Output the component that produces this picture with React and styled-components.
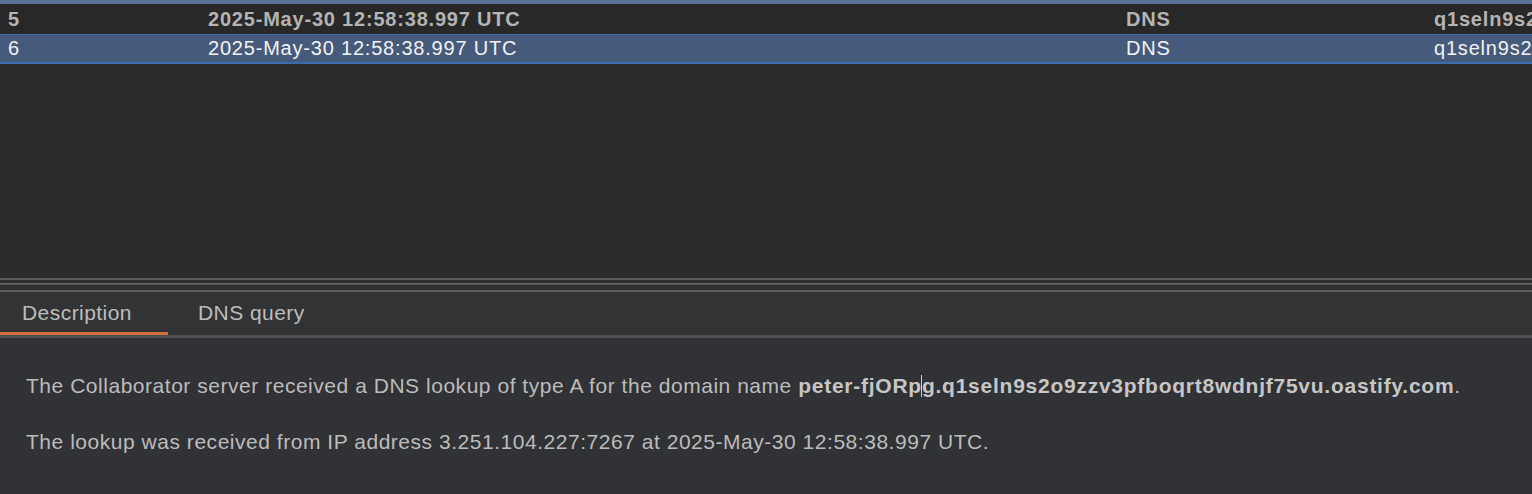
import React from "react";
import styled, { createGlobalStyle } from "styled-components";

const Global = createGlobalStyle`
  html, body { margin: 0; padding: 0; background: #2b2b2b; }
  body { font-family: "Liberation Sans", Arial, sans-serif; overflow: hidden; }
  #root { width: 1532px; height: 494px; }
`;

const Page = styled.div`
  width: 1532px;
  height: 494px;
  display: flex;
  flex-direction: column;
  overflow: hidden;
`;

const TableArea = styled.div`
  height: 278px;
  background: #2b2b2b;
  border-top: 4px solid #5a7196;
  box-sizing: border-box;
  display: flex;
  flex-direction: column;
`;

const Row = styled.div`
  display: grid;
  grid-template-columns: 208px 918px 308px 1fr;
  height: 30px;
  align-items: center;
  box-sizing: border-box;
  font-size: 20px;
  letter-spacing: 0.8px;
  white-space: nowrap;
  overflow: hidden;
  background: ${(p) => (p.$selected ? "#465a7b" : "#282828")};
  color: ${(p) => (p.$selected ? "#f2f2f2" : "#b4b4b4")};
  font-weight: ${(p) => (p.$selected ? 400 : 700)};
  border-top: ${(p) => (p.$selected ? "1px solid #3a6cae" : "none")};
  border-bottom: ${(p) => (p.$selected ? "2px solid #3a6cae" : "none")};
`;

const Cell = styled.div`
  padding-left: ${(p) => (p.$first ? "8px" : "0")};
  overflow: hidden;
  line-height: 26px;
  margin-top: -1px;
`;

const Divider = styled.div`
  display: flex;
  flex-direction: column;
  background: #2e2e2f;
`;

const Line = styled.div`
  height: ${(p) => p.$h}px;
  background: ${(p) => p.$c};
`;

const TabBar = styled.div`
  display: flex;
  height: 46px;
  background: #323335;
  border-bottom: 3px solid #4f4f50;
  box-sizing: border-box;
`;

const Tab = styled.div`
  width: ${(p) => p.$w}px;
  padding-left: ${(p) => p.$pad}px;
  display: flex;
  align-items: center;
  box-sizing: border-box;
  padding-top: 2px;
  font-size: 21px;
  letter-spacing: 0.45px;
  color: #bdbdbd;
  border-bottom: 3px solid ${(p) => (p.$active ? "#d2703b" : "transparent")};
`;

const Content = styled.div`
  flex: 1;
  background: #313235;
  padding: 36px 0 0 26px;
  color: #bcbcbc;
  font-size: 21px;
  letter-spacing: 0.53px;
  white-space: nowrap;
`;

const Para = styled.p`
  margin: 0 0 32px 0;
  line-height: 24px;
`;

const Bold = styled.b`
  font-weight: 700;
  color: #c6c6c6;
  letter-spacing: 0.75px;
`;

const Caret = styled.span`
  display: inline-block;
  width: 1px;
  height: 22px;
  background: #cfcfcf;
  vertical-align: -4px;
  margin: 0 -0.5px;
`;

const rows = [
  { id: "5", time: "2025-May-30 12:58:38.997 UTC", type: "DNS", payload: "q1seln9s2o9zzv3pfboqrt8wdnjf75vu" },
  { id: "6", time: "2025-May-30 12:58:38.997 UTC", type: "DNS", payload: "q1seln9s2o9zzv3pfboqrt8wdnjf75vu", selected: true },
];

export default function App() {
  return (
    <Page>
      <Global />
      <TableArea>
        {rows.map((r) => (
          <Row key={r.id} $selected={r.selected}>
            <Cell $first>{r.id}</Cell>
            <Cell>{r.time}</Cell>
            <Cell>{r.type}</Cell>
            <Cell>{r.payload}</Cell>
          </Row>
        ))}
      </TableArea>
      <Divider>
        <Line $h={2} $c="#5a5a5b" />
        <Line $h={3} $c="#2e2e2f" />
        <Line $h={1} $c="#666667" />
        <Line $h={1} $c="#505051" />
        <Line $h={5} $c="#2f3031" />
        <Line $h={2} $c="#5e5e5f" />
      </Divider>
      <TabBar>
        <Tab $w={168} $pad={22} $active>Description</Tab>
        <Tab $w={170} $pad={30}>DNS query</Tab>
      </TabBar>
      <Content>
        <Para>
          The Collaborator server received a DNS lookup of type A for the domain name{" "}
          <Bold>
            peter-fjORp<Caret />g.q1seln9s2o9zzv3pfboqrt8wdnjf75vu.oastify.com
          </Bold>
          .
        </Para>
        <Para>
          The lookup was received from IP address 3.251.104.227:7267 at 2025-May-30 12:58:38.997 UTC.
        </Para>
      </Content>
    </Page>
  );
}
